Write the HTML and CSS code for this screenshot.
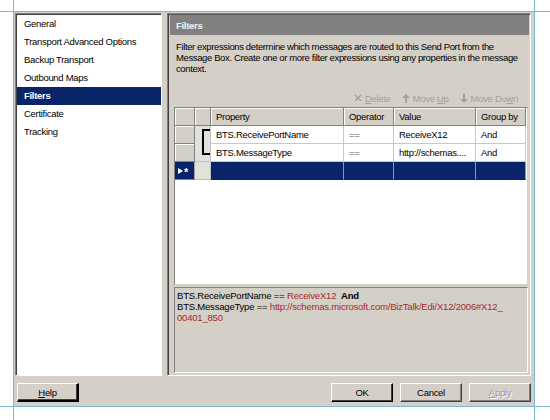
FILE: index.html
```html
<!DOCTYPE html>
<html>
<head>
<meta charset="utf-8">
<link rel="stylesheet" href="styles.css">
</head>
<body>
<div class="dialog">
  <div class="main">
    <ul class="nav">
      <li>General</li>
      <li>Transport Advanced Options</li>
      <li>Backup Transport</li>
      <li>Outbound Maps</li>
      <li class="sel">Filters</li>
      <li>Certificate</li>
      <li>Tracking</li>
    </ul>
    <section class="content">
      <div class="title">Filters</div>
      <p class="desc">Filter expressions determine which messages are routed to this Send Port from the<br>Message Box. Create one or more filter expressions using any properties in the message<br>context.</p>
      <div class="toolbar">
        <span class="tb"><svg class="ico" viewBox="0 0 8 8" width="8" height="8"><path d="M1 1 L7 7 M7 1 L1 7" stroke="#a0a0a0" stroke-width="1.2" fill="none"/></svg><span><u>D</u>elete</span></span>
        <span class="tb"><svg class="ico" viewBox="0 0 8 9" width="8" height="9"><path d="M4 0 L8 4 L5 4 L5 9 L3 9 L3 4 L0 4 Z" fill="#a0a0a0"/></svg><span>Move <u>U</u>p</span></span>
        <span class="tb"><svg class="ico" viewBox="0 0 8 9" width="8" height="9"><path d="M4 9 L8 5 L5 5 L5 0 L3 0 L3 5 L0 5 Z" fill="#a0a0a0"/></svg><span>Move Do<u>w</u>n</span></span>
      </div>
      <div class="grid">
        <div class="hc"></div>
        <div class="hc"></div>
        <div class="hc">Property</div>
        <div class="hc">Operator</div>
        <div class="hc">Value</div>
        <div class="hc">Group by</div>

        <div class="rh"></div>
        <div class="bk"><div class="bracket"></div></div>
        <div class="c">BTS.ReceivePortName</div>
        <div class="c op">==</div>
        <div class="c">ReceiveX12</div>
        <div class="c">And</div>

        <div class="rh"></div>
        <div class="c">BTS.MessageType</div>
        <div class="c op">==</div>
        <div class="c">http://schemas....</div>
        <div class="c">And</div>

        <div class="rh new"><svg viewBox="0 0 5 6" width="5" height="6"><path d="M0 0 L5 3 L0 6 Z" fill="#fff"/></svg><span class="star">*</span></div>
        <div class="bk2"></div>
        <div class="c selc"></div>
        <div class="c selc"></div>
        <div class="c selc"></div>
        <div class="c selc"></div>
      </div>
      <div class="summary">BTS.ReceivePortName == <span class="val">ReceiveX12</span>&nbsp; <b>And</b><br>BTS.MessageType == <span class="val">http://schemas.microsoft.com/BizTalk/Edi/X12/2006#X12_<br>00401_850</span></div>
    </section>
  </div>
  <div class="buttons">
    <button class="btn def help"><u>H</u>elp</button>
    <div class="right">
      <button class="btn def">OK</button>
      <button class="btn">Cancel</button>
      <button class="btn dis"><u>A</u>pply</button>
    </div>
  </div>
</div>
</body>
</html>
```

FILE: styles.css
```css
html, body {
  margin: 0;
  padding: 0;
}
body {
  width: 550px;
  height: 420px;
  overflow: hidden;
  font-family: "Liberation Sans", Arial, sans-serif;
  font-size: 9.5px;
  letter-spacing: -0.3px;
  color: #000;
  background:
    linear-gradient(#7db8da, #7db8da) 0 11px / 100% 1px no-repeat,
    linear-gradient(#7db8da, #7db8da) 0 406px / 100% 1px no-repeat,
    linear-gradient(#7db8da, #7db8da) 13px 0 / 1px 100% no-repeat,
    linear-gradient(#7db8da, #7db8da) 534px 0 / 1px 100% no-repeat,
    #fff;
  padding-top: 12px;
  box-sizing: border-box;
}
.dialog {
  margin-left: 14px;
  width: 520px;
  height: 394px;
  background: #d4d0c8;
  box-sizing: border-box;
  padding: 1px 3px 0 1px;
  display: flex;
  flex-direction: column;
}
.main {
  display: flex;
  gap: 5px;
  height: 363px;
}
.nav {
  list-style: none;
  margin: 0;
  width: 147px;
  box-sizing: border-box;
  background: #fff;
  border: 1px solid;
  border-color: #808080 #fff #fff #808080;
  box-shadow: inset 1px 1px 0 #404040;
  padding: 1px 0 0 1px;
}
.nav li {
  height: 18px;
  line-height: 18px;
  padding-left: 7px;
  white-space: nowrap;
}
.nav li.sel {
  background: #0a246a;
  color: #fff;
  font-weight: bold;
}
.content {
  flex: 1;
  box-sizing: border-box;
  border: 1px solid;
  border-color: #808080 #fff #fff #808080;
  box-shadow: inset 1px 1px 0 #404040;
  padding: 0 1px 2px 2px;
  display: flex;
  flex-direction: column;
}
.title {
  height: 21px;
  line-height: 21px;
  background: #808080;
  border-top: 1px solid #5a5a5a;
  box-sizing: border-box;
  color: #f2f2f2;
  font-weight: bold;
  padding-left: 6px;
}
.desc {
  margin: 6px 0 0 0;
  padding-left: 6px;
  line-height: 11px;
  white-space: nowrap;
  letter-spacing: -0.38px;
}
.toolbar {
  margin-top: 17px;
  height: 14px;
  display: flex;
  justify-content: flex-end;
  align-items: center;
  gap: 11px;
  padding-right: 11px;
  color: #a0a0a0;
}
.tb {
  display: flex;
  align-items: center;
  gap: 3px;
}
.grid {
  margin: 2px 1px 0 4px;
  height: 178px;
  box-sizing: border-box;
  background: #fff;
  border: 1px solid;
  border-color: #808080 #d4d0c8 #d4d0c8 #808080;
  display: grid;
  grid-template-columns: 20px 16px 133px 50px 82px 50px;
  grid-template-rows: 18px 18px 18px 18px;
  align-content: start;
}
.hc {
  background: #d4d0c8;
  box-sizing: border-box;
  border-right: 1px solid #808080;
  border-bottom: 1px solid #808080;
  box-shadow: inset 1px 1px 0 #fff;
  line-height: 17px;
  padding-left: 5px;
  white-space: nowrap;
}
.rh {
  background: #d4d0c8;
  box-sizing: border-box;
  border-right: 1px solid #808080;
  border-bottom: 1px solid #808080;
  box-shadow: inset 1px 1px 0 #fff;
}
.rh.new {
  background: #0a246a;
  box-shadow: none;
  border-right-color: #a0a0a0;
  display: flex;
  align-items: center;
  padding-left: 3px;
  gap: 1px;
  color: #fff;
}
.star {
  font-weight: bold;
  font-size: 11px;
  line-height: 10px;
  height: 7px;
}
.bk {
  grid-row: span 2;
  background: #e3e1dc;
  box-sizing: border-box;
  border-right: 1px solid #c0c0c0;
  border-bottom: 1px solid #c0c0c0;
  padding: 3px 0 6px 7px;
}
.bracket {
  height: 100%;
  box-sizing: border-box;
  border: 2px solid #000;
  border-right: none;
}
.bk2 {
  background: #e3e1dc;
  box-sizing: border-box;
  border-right: 1px solid #c0c0c0;
  border-bottom: 1px solid #c0c0c0;
}
.c {
  box-sizing: border-box;
  border-right: 1px solid #c8c8c8;
  border-bottom: 1px solid #c8c8c8;
  line-height: 17px;
  padding-left: 5px;
  white-space: nowrap;
  overflow: hidden;
}
.c.op {
  color: #555;
}
.c.selc {
  background: #0a246a;
  border-right-color: #8a96b8;
  border-bottom-color: #0a246a;
}
.summary {
  margin: 2px 1px 0 4px;
  flex: 1;
  box-sizing: border-box;
  border: 1px solid;
  border-color: #808080 #fff #fff #808080;
  padding: 2px 2px;
  line-height: 11px;
  white-space: nowrap;
  letter-spacing: -0.2px;
}
.val {
  color: #a52a2a;
}
.buttons {
  margin-top: 7px;
  display: flex;
  justify-content: space-between;
  padding-left: 2px;
}
.right {
  display: flex;
  gap: 7px;
}
.btn {
  width: 62px;
  height: 19px;
  padding: 0;
  margin: 0;
  font: inherit;
  letter-spacing: inherit;
  color: #000;
  background: #d4d0c8;
  border: 1px solid;
  border-color: #fff #404040 #404040 #fff;
  box-shadow: inset -1px -1px 0 #808080;
  box-sizing: border-box;
}
.btn.def {
  border-color: #fff #000 #000 #fff;
  box-shadow: inset -1px -1px 0 #404040;
}
.btn.help {
  border-width: 1px 2px 2px 1px;
}
.btn.dis {
  color: #9a9a9a;
  text-shadow: 1px 1px 0 #fff;
}
```
